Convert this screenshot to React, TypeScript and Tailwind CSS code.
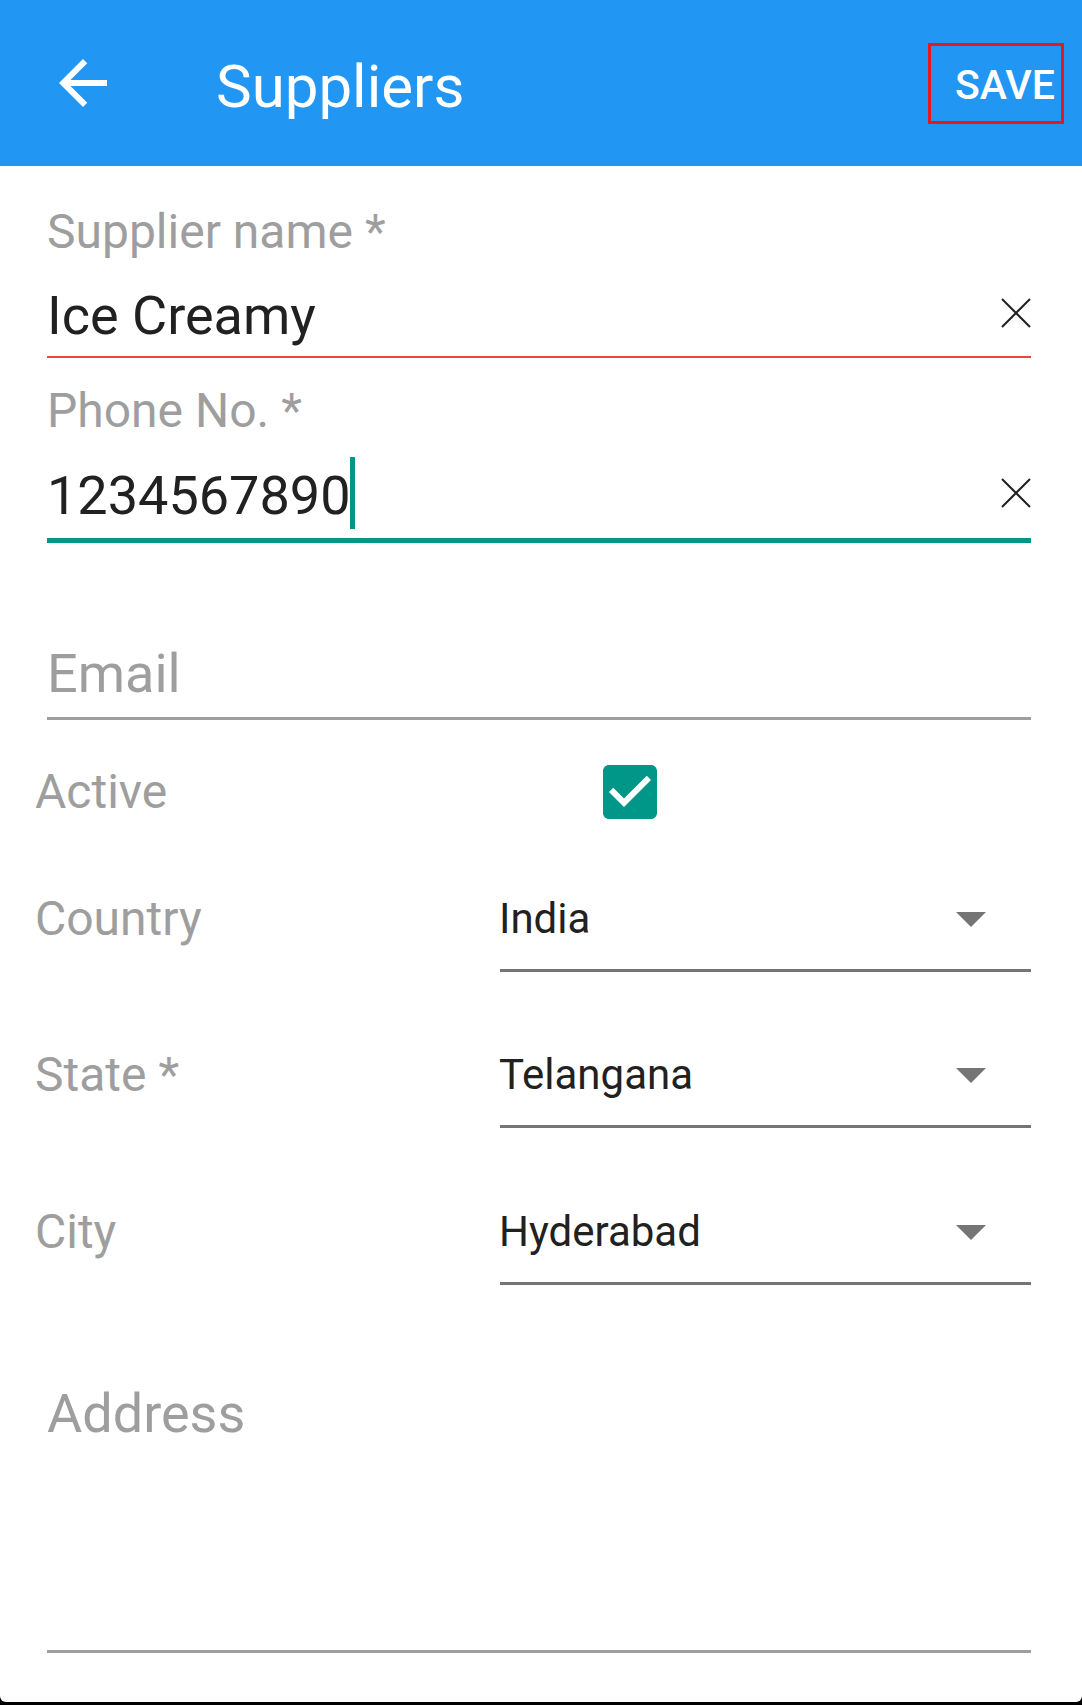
import React from "react";

const ClearIcon = () => (
  <svg width="30" height="30" viewBox="0 0 30 30" className="mt-[14px] shrink-0">
    <path d="M1 1L29 29M29 1L1 29" stroke="#212121" strokeWidth="2" fill="none" />
  </svg>
);

const Caret = () => (
  <svg width="30" height="15" viewBox="0 0 30 15" className="mr-[45px] shrink-0">
    <polygon points="0,0 30,0 15,15" fill="#757575" />
  </svg>
);

function SelectRow({ label, value, top }: { label: string; value: string; top: string }) {
  return (
    <div className={`flex pl-[35px] ${top}`}>
      <div className="w-[465px] text-[48px] leading-[56px] text-[#9e9e9e]">{label}</div>
      <div className="flex-1 flex flex-col pr-[51px]">
        <div className="flex items-center justify-between h-[56px]">
          <span className="-ml-[1px] text-[42px] leading-[56px] text-[#212121]">{value}</span>
          <Caret />
        </div>
        <div className="mt-[22px] h-[3px] bg-[#757575]" />
      </div>
    </div>
  );
}

export default function App() {
  return (
    <div className="w-full h-[1705px] bg-black flex flex-col font-['Roboto',sans-serif]">
      {/* toolbar */}
      <div className="h-[166px] bg-[#2196F3] flex items-center shrink-0">
        <svg width="72" height="72" viewBox="0 0 24 24" className="ml-[47px] shrink-0">
          <path d="M20 11H7.83l5.59-5.59L12 4l-8 8 8 8 1.41-1.41L7.83 13H20v-2z" fill="#fff" />
        </svg>
        <h1 className="ml-[97px] mt-[7px] text-[60px] leading-[60px] text-white">Suppliers</h1>
        <div className="ml-auto mr-[18px] w-[136px] h-[81px] border-[3px] border-[#e8161d] flex items-center justify-end pr-[6px]">
          <span className="mt-[3px] text-[41px] leading-[42px] font-medium text-white">SAVE</span>
        </div>
      </div>

      {/* form card */}
      <div className="flex-1 bg-white rounded-b-[6px] mb-[3px] flex flex-col">
        <div className="pt-[38px] pl-[47px] pr-[51px]">
          <div className="text-[48px] leading-[56px] text-[#9e9e9e]">Supplier name *</div>
          <div className="flex items-start justify-between pt-[24px] pb-[8px]">
            <span className="text-[54px] leading-[64px] text-[#212121]">Ice Creamy</span>
            <ClearIcon />
          </div>
          <div className="h-[2px] bg-[#f44336]" />

          <div className="mt-[25px] text-[48px] leading-[56px] text-[#9e9e9e]">Phone No. *</div>
          <div className="flex items-start justify-between pt-[25px] pb-[9px]">
            <div className="flex items-start">
              <span className="text-[54px] leading-[64px] text-[#212121]">1234567890</span>
              <span className="mt-[-7px] -ml-[1px] w-[5px] h-[72px] bg-[#009688]" />
            </div>
            <ClearIcon />
          </div>
          <div className="h-[5px] bg-[#009688]" />

          <div className="mt-[99px] pb-[11px] text-[54px] leading-[64px] text-[#9e9e9e]">Email</div>
          <div className="h-[3px] bg-[#9e9e9e]" />
        </div>

        <div className="mt-[36px] h-[72px] flex items-center pl-[35px]">
          <span className="w-[559px] text-[48px] leading-[56px] text-[#9e9e9e]">Active</span>
          <svg width="72" height="72" viewBox="0 0 24 24" className="shrink-0">
            <path
              d="M19 3H5c-1.11 0-2 .9-2 2v14c0 1.1.89 2 2 2h14c1.11 0 2-.9 2-2V5c0-1.1-.89-2-2-2zm-9 14l-5-5 1.41-1.41L10 14.17l7.59-7.59L19 8l-9 9z"
              fill="#009688"
            />
          </svg>
        </div>

        <SelectRow label="Country" value="India" top="mt-[63px]" />
        <SelectRow label="State *" value="Telangana" top="mt-[75px]" />
        <SelectRow label="City" value="Hyderabad" top="mt-[76px]" />

        <div className="pl-[47px] pr-[51px] mt-[97px]">
          <div className="text-[54px] leading-[64px] text-[#9e9e9e]">Address</div>
          <div className="mt-[204px] h-[3px] bg-[#9e9e9e]" />
        </div>
      </div>
    </div>
  );
}
